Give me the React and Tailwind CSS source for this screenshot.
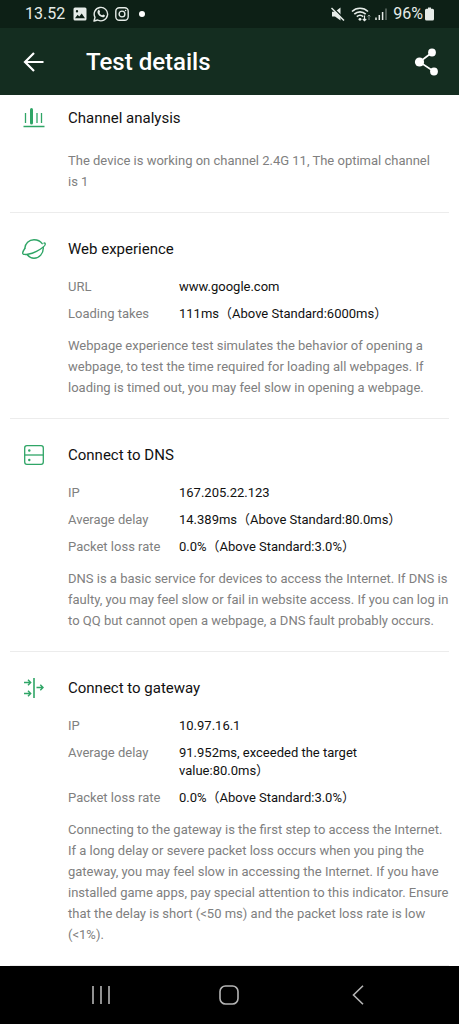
import clsx from 'clsx';

const sections = [
  {
    title: 'Channel analysis',
    icon: ChannelIcon,
    rows: [],
    text: 'The device is working on channel 2.4G 11, The optimal channel is 1',
  },
  {
    title: 'Web experience',
    icon: PlanetIcon,
    rows: [
      ['URL', 'www.google.com'],
      ['Loading takes', '111ms（Above Standard:6000ms）'],
    ],
    text: 'Webpage experience test simulates the behavior of opening a webpage, to test the time required for loading all webpages. If loading is timed out, you may feel slow in opening a webpage.',
  },
  {
    title: 'Connect to DNS',
    icon: ServerIcon,
    rows: [
      ['IP', '167.205.22.123'],
      ['Average delay', '14.389ms（Above Standard:80.0ms）'],
      ['Packet loss rate', '0.0%（Above Standard:3.0%）'],
    ],
    text: 'DNS is a basic service for devices to access the Internet. If DNS is faulty, you may feel slow or fail in website access. If you can log in to QQ but cannot open a webpage, a DNS fault probably occurs.',
  },
  {
    title: 'Connect to gateway',
    icon: GatewayIcon,
    rows: [
      ['IP', '10.97.16.1'],
      ['Average delay', '91.952ms, exceeded the target value:80.0ms）'],
      ['Packet loss rate', '0.0%（Above Standard:3.0%）'],
    ],
    text: 'Connecting to the gateway is the first step to access the Internet. If a long delay or severe packet loss occurs when you ping the gateway, you may feel slow in accessing the Internet. If you have installed game apps, pay special attention to this indicator. Ensure that the delay is short (<50 ms) and the packet loss rate is low (<1%).',
  },
];

function ChannelIcon() {
  return (
    <svg viewBox="0 0 24 24" className="h-6 w-6" fill="none" stroke="#2fa566">
      <path d="M3.5 7v10M15 7v10M19.5 7v10" strokeWidth="1.3" />
      <path d="M9.5 3.5v13.500" strokeWidth="3" strokeLinecap="round" />
      <path d="M1.5 20.5h21" strokeWidth="1.5" />
    </svg>
  );
}

function PlanetIcon() {
  return (
    <svg viewBox="0 0 24 24" className="h-6 w-6" fill="none" stroke="#2fa566" strokeWidth="1.4" strokeLinecap="round">
      <path d="M2.800 11.500C3 6.500 7 2.700 12 2.700c3.600 0 6.500 1.500 8.200 4" />
      <path d="M21.300 10.500c.200 6-4 10.700-9.300 10.700-2.600 0-4.900-1.200-6.500-3.200" />
      <path d="M2.800 11.500C1.200 13.800.300 15.600.800 16.600c.900 1.600 7.800.900 13.700-2.300 6-3.200 9.300-6.300 8.700-7.700-.200-.500-.700-.600-1.200-.500" />
    </svg>
  );
}

function ServerIcon() {
  return (
    <svg viewBox="0 0 24 24" className="h-6 w-6" fill="none" stroke="#2fa566" strokeWidth="1.3">
      <rect x="2.700" y="2.700" width="18.600" height="18.600" rx="2.200" />
      <path d="M2.700 12h18.600" />
      <circle cx="7.300" cy="7.500" r="1.2" fill="#2fa566" stroke="none" />
      <circle cx="7.300" cy="17" r="1.2" fill="#2fa566" stroke="none" />
    </svg>
  );
}

function GatewayIcon() {
  return (
    <svg viewBox="0 0 24 24" className="h-6 w-6" fill="none" stroke="#2fa566" strokeWidth="1.4">
      <path d="M12 2v20" strokeWidth="1.6" />
      <path d="M2 6.500h6.500M6 3.800l2.700 2.700L6 9.200M2 17.500h6.500M6 14.800l2.700 2.700L6 20.200M14.500 11.500h6.500M18.300 8.800l2.700 2.700-2.700 2.700" />
    </svg>
  );
}

function StatusBar() {
  return (
    <div className="flex h-7 items-center justify-between bg-[#0d2016] px-[25px] text-base text-[#e6ece8]">
      <div className="flex items-center gap-[6px]">
        <span>13.52</span>
        <svg viewBox="0 0 14 14" className="ml-[2px] h-[14px] w-[14px]">
          <path
            fill="currentColor"
            fillRule="evenodd"
            d="M2 .5h10A1.500 1.500 0 0 1 13.500 2v10a1.500 1.500 0 0 1-1.500 1.500H2A1.500 1.500 0 0 1 .5 12V2A1.500 1.500 0 0 1 2 .5ZM2 11.300h10L8.700 6.500 6.300 9.500 4.600 7.800ZM4 3a1.200 1.200 0 1 0 0 2.400A1.200 1.200 0 0 0 4 3Z"
          />
        </svg>
        <svg viewBox="0 0 16 16" className="h-4 w-4" fill="none" stroke="currentColor" strokeWidth="1.400">
          <path d="M1 15l1-3.700A6.700 6.700 0 1 1 4.700 14Z" strokeLinejoin="round" />
          <path
            fill="currentColor"
            stroke="none"
            d="M5.200 4.200c.5-.5 1-.4 1.200 0l.7 1.500c.1.300-.5.900-.6 1.200.6 1.200 1.400 1.900 2.600 2.400.3 0 .8-1 1.100-.9l1.500.8c.4.200.2 1-.2 1.500-.8.9-2.200.9-3.900-.1C5.800 9.500 4.600 7.900 4.400 6.300c0-.9.300-1.600.8-2.100Z"
          />
        </svg>
        <svg viewBox="0 0 14 14" className="h-[14px] w-[14px]" fill="none" stroke="currentColor" strokeWidth="1.400">
          <rect x=".8" y=".8" width="12.400" height="12.400" rx="3.500" />
          <circle cx="7" cy="7" r="2.900" />
          <circle cx="10.600" cy="3.500" r=".8" fill="currentColor" stroke="none" />
        </svg>
        <span className="ml-1 h-[6px] w-[6px] rounded-full bg-white" />
      </div>

      <div className="flex items-center gap-1">
        <svg viewBox="0 0 14 14" className="h-[14px] w-[14px]">
          <path fill="currentColor" d="M1 4.700h3L9.500.5v13L4 9.500H1Z" />
          <path d="M1.300 0 14 12.700" stroke="#0d2016" strokeWidth="1.500" />
          <path d="M.5 1l12.500 12.500" stroke="currentColor" strokeWidth="1.500" />
        </svg>
        <svg viewBox="0 0 20 16" className="ml-[2px] h-4 w-5" fill="none" stroke="currentColor" strokeWidth="1.600">
          <path d="M1 5.500c4.500-4.300 11.500-4.300 16 0M3.300 8.200c3.300-3.100 8.100-3.100 11.400 0M5.800 10.700c1.900-1.700 4.500-1.700 6.400 0" />
          <circle cx="9" cy="13.300" r="1.400" fill="currentColor" stroke="none" />
          <path d="M13.500 9.500v5M11.800 13l1.700 1.700 1.700-1.700" strokeWidth="1.200" />
          <path d="M18 14V9M16.600 10.500 18 9l1.400 1.500" strokeWidth="1" opacity=".5" />
        </svg>
        <svg viewBox="0 0 12 14" className="h-[14px] w-3" stroke="currentColor" strokeWidth="1.500">
          <path d="M1 13v-2.500M4.300 13V8M7.600 13V5" />
          <path d="M11 13V1.500" opacity=".4" />
        </svg>
        <span className="ml-[2px]">96%</span>
        <svg viewBox="0 0 9 14" className="-ml-[2px] h-[14px] w-[9px]">
          <path fill="currentColor" d="M3 .5h3v1.300h1.500A1.500 1.500 0 0 1 9 3.300v8.700a1.500 1.500 0 0 1-1.500 1.500h-6A1.500 1.500 0 0 1 0 12V3.300a1.500 1.500 0 0 1 1.500-1.500H3Z" />
        </svg>
      </div>
    </div>
  );
}

function Section({ title, icon: Icon, rows, text, first }) {
  return (
    <section className={clsx('mx-[10px] flex border-b border-[#ececec] pb-5', first ? 'pt-[11px]' : 'pt-6')}>
      <div className="w-[58px] shrink-0 pl-3">
        <Icon />
      </div>
      <div className="min-w-0 flex-1">
        <h2 className="text-[15px] leading-6 text-[#111111]">{title}</h2>
        {rows.length > 0 && (
          <dl className="mt-[17px] flex flex-col gap-[9px] text-[13px] leading-[18px]">
            {rows.map(([label, value]) => (
              <div key={label} className="flex">
                <dt className="w-[111px] shrink-0 text-[#808080]">{label}</dt>
                <dd className="max-w-[220px] text-[#111111]">{value}</dd>
              </div>
            ))}
          </dl>
        )}
        <p className={clsx('text-[13px] leading-[21px] text-[#808080]', rows.length > 0 ? 'mt-3' : 'mt-5 pr-3')}>{text}</p>
      </div>
    </section>
  );
}

export default function App() {
  return (
    <div className="flex min-h-screen flex-col bg-white font-['Roboto','Noto_Sans_CJK_SC',sans-serif]">
      <header className="bg-[#142d20] text-white">
        <StatusBar />
        <div className="flex h-[67px] items-center pr-[21px] pl-[22px]">
          <button type="button" aria-label="Back">
            <svg viewBox="0 0 24 24" className="h-6 w-6" fill="none" stroke="currentColor" strokeWidth="2.200">
              <path d="M21.500 12H3M12 3l-9 9 9 9" />
            </svg>
          </button>
          <h1 className="ml-10 flex-1 text-2xl font-medium">Test details</h1>
          <button type="button" aria-label="Share">
            <svg viewBox="0 0 24 28" className="h-7 w-6">
              <path d="M18 4.500 5.500 14 20 23.500" fill="none" stroke="currentColor" strokeWidth="1.600" />
              <g fill="currentColor">
                <circle cx="18" cy="4.500" r="3.900" />
                <circle cx="5.500" cy="14" r="4.600" />
                <circle cx="20" cy="23.500" r="3.900" />
              </g>
            </svg>
          </button>
        </div>
      </header>

      <main className="flex-1">
        {sections.map((section, i) => (
          <Section key={section.title} {...section} first={i === 0} />
        ))}
      </main>

      {/* Android navigation */}
      <nav className="flex h-[58px] items-center justify-around bg-black px-[37px] text-[#b5b5b5]">
        <button type="button" aria-label="Recent apps">
          <svg viewBox="0 0 20 20" className="h-5 w-5" stroke="currentColor" strokeWidth="1.600">
            <path d="M2 1v18M10 1v18M18 1v18" />
          </svg>
        </button>
        <button type="button" aria-label="Home">
          <svg viewBox="0 0 20 20" className="h-5 w-5" fill="none" stroke="currentColor" strokeWidth="1.600">
            <rect x="1" y="1" width="18" height="18" rx="5.500" />
          </svg>
        </button>
        <button type="button" aria-label="Go back">
          <svg viewBox="0 0 20 20" className="h-5 w-5" fill="none" stroke="currentColor" strokeWidth="1.600">
            <path d="M15 .8 5.500 10l9.500 9.200" />
          </svg>
        </button>
      </nav>
    </div>
  );
}
